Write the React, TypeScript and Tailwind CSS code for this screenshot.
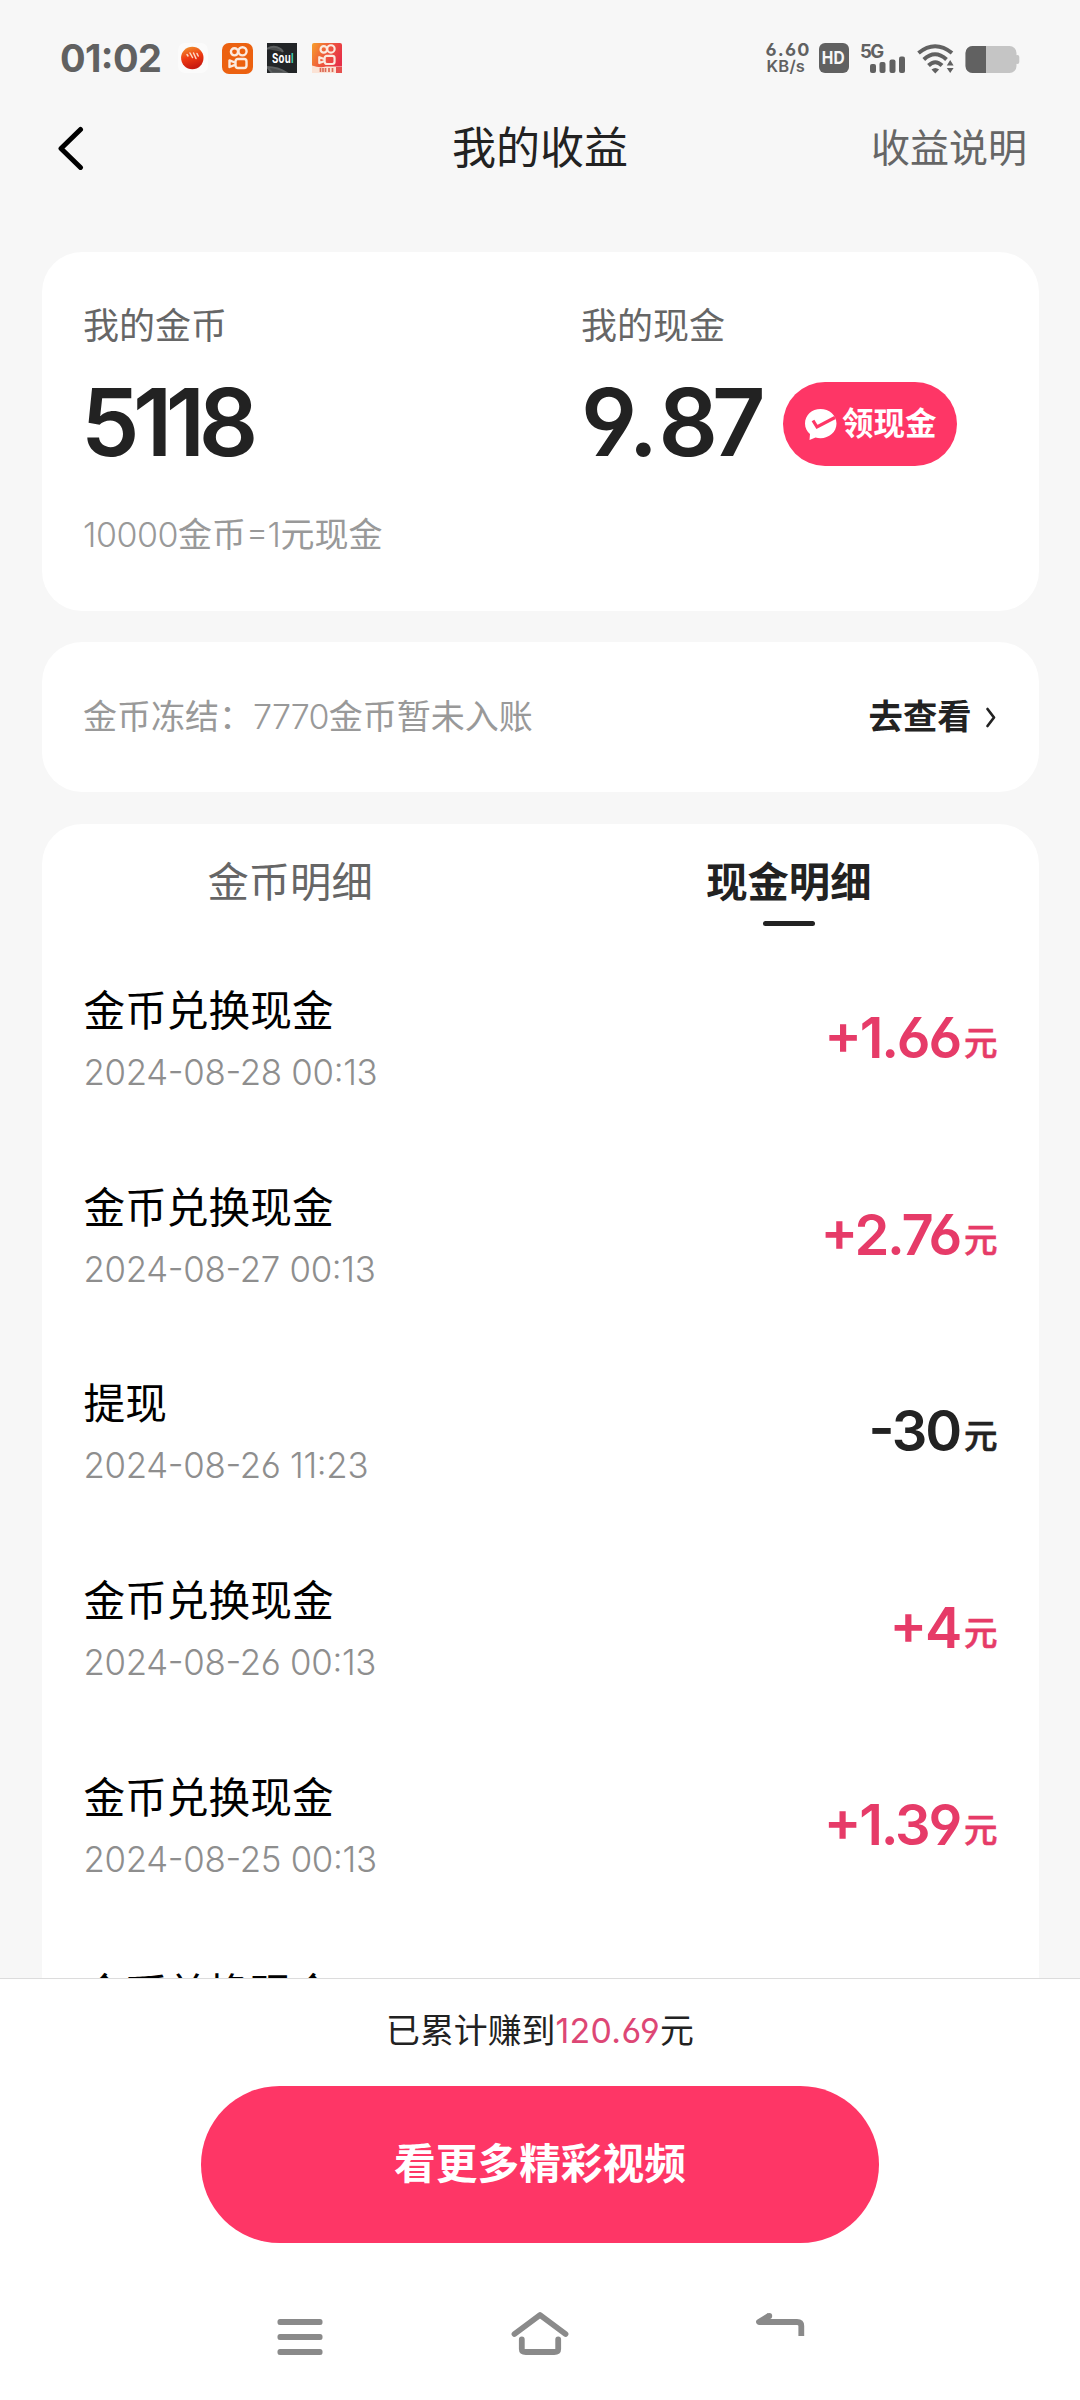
import React from "react";

type Entry = { title: string; time?: string; amount?: string; income?: boolean };

const entries: Entry[] = [
  { title: "金币兑换现金", time: "2024-08-28 00:13", amount: "+1.66", income: true },
  { title: "金币兑换现金", time: "2024-08-27 00:13", amount: "+2.76", income: true },
  { title: "提现", time: "2024-08-26 11:23", amount: "-30" },
  { title: "金币兑换现金", time: "2024-08-26 00:13", amount: "+4", income: true },
  { title: "金币兑换现金", time: "2024-08-25 00:13", amount: "+1.39", income: true },
  { title: "金币兑换现金" },
];

function CameraGlyph() {
  return (
    <g fill="none" stroke="#fbeadf" strokeWidth="2.4">
      <circle cx="12.5" cy="8.8" r="3.6" />
      <circle cx="20.5" cy="8.3" r="4.1" />
      <rect x="13.5" y="16" width="11" height="9" rx="2.4" />
      <path d="M13 19.5 7.5 17.4v6.6l5.5-2.1" strokeLinejoin="round" />
    </g>
  );
}

function StatusBar() {
  return (
    <div className="flex h-[100px] shrink-0 items-start text-[#616161]">
      <div className="ml-[60px] mt-[34px] w-[118px] text-[38px] font-bold leading-[48px] tracking-[-0.600px]">01:02</div>
      <svg className="mt-[43px]" width="30" height="30" viewBox="0 0 30 30">
        <defs>
          <linearGradient id="ball" x1="0" y1="0" x2="0.3" y2="1">
            <stop offset="0" stopColor="#f09a30" />
            <stop offset="0.55" stopColor="#ee3a12" />
            <stop offset="1" stopColor="#c81a10" />
          </linearGradient>
        </defs>
        <rect width="30" height="30" rx="7" fill="#fbfbfb" />
        <circle cx="14.3" cy="15" r="11.2" fill="url(#ball)" />
        <path d="M9 11.500l1 1.500M12 10l2.500 4.500M15.500 10l2.500 5.500M19 10.500l1.200 2.500" stroke="#fbd9c4" strokeWidth="1.5" strokeLinecap="round" />
      </svg>
      <svg className="ml-[13.5px] mt-[43px]" width="31" height="31" viewBox="0 0 31 31">
        <rect width="31" height="31" rx="7" fill="#ec6110" />
        <CameraGlyph />
      </svg>
      <div className="relative ml-[14px] mt-[43px] h-[30px] w-[30px] overflow-hidden bg-[#222527]">
        <svg className="absolute inset-0" width="30" height="30" viewBox="0 0 30 30">
          <path d="M0 6C7 1 14 5 16 9M0 24c8 0 14 2 20 6H5z" stroke="#5d6061" strokeWidth="2" fill="#4a4d4e" />
        </svg>
        <div className="absolute left-[5.5px] top-[8px] origin-left scale-x-[0.74] text-[13px] font-bold leading-[14px] tracking-[0.4px] text-white">
          Sou<span className="text-[#3fd0b4]">l</span>
        </div>
      </div>
      <svg className="ml-[15px] mt-[43px]" width="30" height="30" viewBox="0 0 30 30">
        <defs>
          <linearGradient id="lite" x1="0" y1="0" x2="1" y2="0.5">
            <stop offset="0" stopColor="#f7a02c" />
            <stop offset="0.5" stopColor="#ee5a3c" />
            <stop offset="1" stopColor="#e62f48" />
          </linearGradient>
        </defs>
        <rect width="30" height="30" rx="2" fill="url(#lite)" />
        <g transform="translate(0.5 -1.500) scale(0.9)"><CameraGlyph /></g>
        <path d="M0 22.500q8 3 14 1h16V26q-2 4-6 4H0z" fill="#fbe3d6" />
        <path d="M24 24h6v6h-6z" fill="#e6504e" />
        <path d="M8.500 25v4M11 25v4M13.500 25v4M17 25v4M20.500 25v4" stroke="#dc6a55" strokeWidth="1.7" />
      </svg>

      <div className="ml-[424px] mt-[42px] w-[53px] text-[18px] font-bold leading-[16px]">
        <div className="tracking-[1.200px]">6.60</div>
        <div className="pl-[1px] text-[16.500px] font-semibold leading-[17px] tracking-[0.200px]">KB/s</div>
      </div>
      <div className="mt-[43px] flex h-[30px] w-[30px] items-center justify-center rounded-[6px] bg-[#616161] text-[18px] font-bold leading-none text-[#f7f7f7]">
        <span className="scale-x-[0.86]">HD</span>
      </div>
      <div className="ml-[12px] mt-[43px] w-[46px]">
        <div className="-ml-[0.5px] text-[18.500px] font-bold leading-[17px] tracking-[-1.500px]">5G</div>
        <svg className="-mt-[4px] ml-[9px] block" width="36" height="17" viewBox="0 0 36 17">
          <g fill="#616161">
            <rect x="0" y="8" width="6" height="9" rx="2" />
            <rect x="9.500" y="6" width="6" height="11" rx="2" />
            <rect x="19.500" y="3.500" width="6" height="13.500" rx="2" />
            <rect x="29" y="0.500" width="6" height="16.500" rx="2" />
          </g>
        </svg>
      </div>
      <svg className="ml-[10px] mt-[43px]" width="40" height="31" viewBox="0 0 40 31">
        <g fill="none" stroke="#616161" strokeWidth="4">
          <path d="M1.500 10q16.500-13.500 33.500 0" />
          <path d="M6.800 16.500q11.200-10.500 22.700 0" />
          <path d="M11.500 22.500q6.800-6.500 13.500 0" />
        </g>
        <path d="M14.500 26.500q3.800-3 7.600 0L18.300 30.500zM29.800 22.500l3.400-5.500 3.400 5.500zM29.800 25h6.800l-3.400 5z" fill="#616161" />
      </svg>
      <svg className="ml-[8px] mt-[46px]" width="55" height="27" viewBox="0 0 55 27">
        <rect x="0.500" width="51" height="27" rx="7" fill="#c5c5c5" />
        <rect x="50" y="9" width="4.300" height="9" rx="2" fill="#c5c5c5" />
        <path d="M7.500 0H21v27H7.500a7 7 0 0 1-7-7V7a7 7 0 0 1 7-7z" fill="#616161" />
      </svg>
    </div>
  );
}

function Header() {
  return (
    <header className="flex h-[152px] shrink-0 items-start justify-between pt-[18px]">
      <div className="flex h-[60px] w-[300px] items-center pl-[56px]">
        <svg width="28" height="44" viewBox="0 0 28 44" fill="none" stroke="#000" strokeWidth="5" strokeLinecap="round" strokeLinejoin="round">
          <path d="M24.500 3.500 5 22.500l19.500 19" />
        </svg>
      </div>
      <h1 className="text-[44px] leading-[60px] text-[#222]">我的收益</h1>
      <div className="w-[300px] pr-[53px] text-right text-[39px] leading-[60px] text-[#666]">收益说明</div>
    </header>
  );
}

function Balance() {
  return (
    <section className="h-[359px] shrink-0 rounded-[40px] bg-white pl-[41px] pt-[47px]">
      <div className="flex">
        <div className="w-[498px]">
          <div className="text-[36px] leading-[54px] text-[#666]">我的金币</div>
          <div className="-ml-[2px] mt-[9px] text-[93px] font-semibold leading-[120px] tracking-[-6.500px] text-[#222]">5118</div>
        </div>
        <div>
          <div className="text-[36px] leading-[54px] text-[#666]">我的现金</div>
          <div className="mt-[9px] flex items-center">
            <div className="w-[202px] text-[93px] font-semibold leading-[120px] tracking-[-6px] text-[#222]">
              <span className="tracking-[0.500px]">9.</span>87
            </div>
            <button className="mt-[4px] flex h-[84px] w-[174px] items-center rounded-full bg-[#fe3666] pl-[21px] text-white">
              <svg width="33" height="33" viewBox="0 0 33 33">
                <path d="M16.500 1C8 1 1 7 1 15.500c0 4.500 2 8 5 10.500l-.500 6 6-2.500c1.600.500 3.200.700 5 .700C25 30.200 32.500 24 32.500 15.500S25 1 16.500 1z" fill="#fff" />
                <path d="M9 12.500l4 6.500L31 9.500" fill="none" stroke="#fe3666" strokeWidth="3.200" />
              </svg>
              <span className="ml-[5px] text-[31.500px] font-bold leading-[50px]">领现金</span>
            </button>
          </div>
        </div>
      </div>
      <div className="mt-[27px] text-[34px] leading-[52px] text-[#999]">
        <span className="font-light tracking-[-0.500px]">10000</span>金币<span className="font-light tracking-[-0.500px]">=1</span>元现金
      </div>
    </section>
  );
}

function Frozen() {
  return (
    <section className="mt-[31px] flex h-[150px] shrink-0 items-center justify-between rounded-[40px] bg-white pl-[41px] pr-[41px]">
      <div className="text-[34px] leading-[52px] text-[#999]">金币冻结：<span className="font-light tracking-[-0.800px]">7770</span>金币暂未入账</div>
      <div className="flex items-center text-[34.300px] font-bold leading-[52px] text-[#222]">
        去查看
        <svg className="ml-[12px]" width="14" height="22" viewBox="0 0 14 22" fill="none" stroke="#222" strokeWidth="2.700" strokeLinecap="round" strokeLinejoin="round">
          <path d="M3.500 3 10 11.500l-6.500 8.500" />
        </svg>
      </div>
    </section>
  );
}

function Row({ entry }: { entry: Entry }) {
  return (
    <li className="flex h-[196.700px] shrink-0 items-start justify-between">
      <div>
        <div className="text-[41.700px] leading-[62px] text-black">{entry.title}</div>
        {entry.time && <div className="text-[34.800px] font-light leading-[60px] tracking-[-0.300px] text-[#8e8e8e]">{entry.time}</div>}
      </div>
      {entry.amount && (
        <div className={entry.income ? "mt-[23px] flex items-baseline text-[#e63b68]" : "mt-[23px] flex items-baseline text-[#222]"}>
          <span className="text-[56px] font-semibold leading-[70px] tracking-[-2.200px]">{entry.amount}</span>
          <span className="ml-[4px] -translate-y-[3px] pr-[1px] text-[33.500px] font-medium [-webkit-text-stroke:0.600px_currentColor]">元</span>
        </div>
      )}
    </li>
  );
}

function Details() {
  return (
    <section className="mt-[32px] flex min-h-0 flex-1 flex-col rounded-t-[40px] bg-white">
      <div className="flex h-[156px] shrink-0 pt-[28px] text-center text-[41.300px] leading-[60px]">
        <div className="w-1/2 pr-[2px] text-[#666]">金币明细</div>
        <div className="flex w-1/2 flex-col items-center pr-[1px] font-bold text-[#222]">
          现金明细
          <div className="mt-[9px] h-[5px] w-[52px] rounded-full bg-[#222]" />
        </div>
      </div>
      <ul className="flex min-h-0 flex-1 flex-col overflow-hidden pl-[41.500px] pr-[40px]">
        {entries.map((e, i) => (
          <Row key={i} entry={e} />
        ))}
      </ul>
    </section>
  );
}

function Footer() {
  return (
    <footer className="flex h-[422px] shrink-0 flex-col items-center border-t border-[#dcdcdc] bg-white">
      <div className="mt-[26px] text-[33.900px] leading-[52px] text-[#222]">
        已累计赚到<span className="tracking-[0.300px] text-[#dd4775]">120.69</span>元
      </div>
      <button className="mt-[29px] h-[157px] w-[678px] rounded-full bg-[#fe3666] text-[41.700px] font-bold text-white">看更多精彩视频</button>
      <div className="mt-[60px] flex w-full justify-between pl-[270px] pr-[270px]">
        <svg width="60" height="60" viewBox="270 2303 60 60" fill="#8a8a8a">
          <rect x="277.500" y="2319" width="45" height="6" rx="2.500" />
          <rect x="277.500" y="2334" width="45" height="6" rx="2.500" />
          <rect x="277.500" y="2349" width="45" height="6" rx="2.500" />
        </svg>
        <svg width="60" height="60" viewBox="510 2303 60 60" fill="none" stroke="#8a8a8a" strokeWidth="5.800" strokeLinecap="round" strokeLinejoin="round">
          <path d="M514.500 2334 540 2315l25.500 19" />
          <path d="M521.800 2339.500V2349q0 3 4 3h28.400q4 0 4-3v-9.500" />
        </svg>
        <svg width="60" height="60" viewBox="750 2303 60 60" fill="none" stroke="#8a8a8a" strokeWidth="5.800" strokeLinejoin="round">
          <path d="M769.500 2315.500 759 2322H797q4.300 0 4.300 4v10" />
          <circle cx="769.300" cy="2316" r="2.900" fill="#8a8a8a" stroke="none" />
        </svg>
      </div>
    </footer>
  );
}

export default function App() {
  return (
    <div className="flex h-[2400px] w-[1080px] flex-col overflow-hidden whitespace-nowrap bg-[#f7f7f7] font-['Inter','Noto_Sans_CJK_SC',sans-serif] [font-feature-settings:'cv03','cv04','case']">
      <StatusBar />
      <Header />
      <main className="flex min-h-0 flex-1 flex-col pl-[42px] pr-[41.500px]">
        <Balance />
        <Frozen />
        <Details />
      </main>
      <Footer />
    </div>
  );
}
